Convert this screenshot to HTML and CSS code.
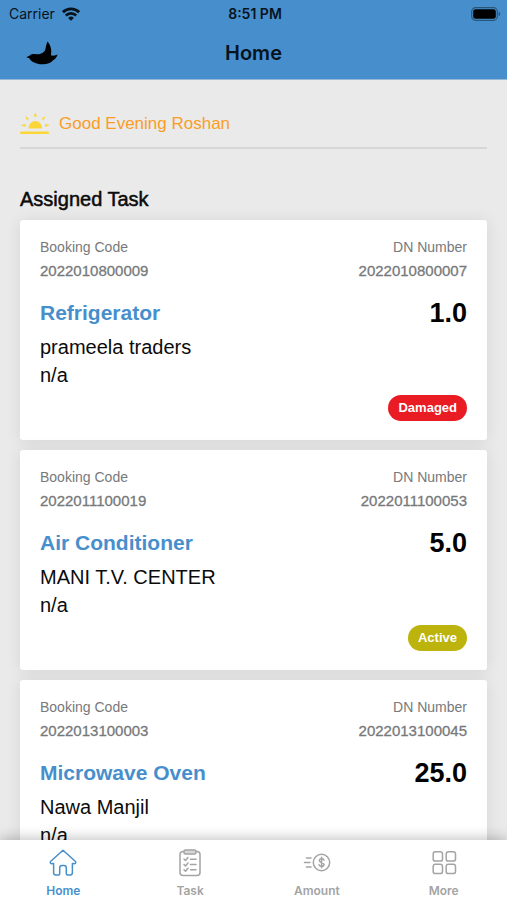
FILE: index.html
```html
<!DOCTYPE html>
<html lang="en">
<head>
<meta charset="utf-8">
<meta name="viewport" content="width=device-width, initial-scale=1">
<title>Home</title>
<link rel="stylesheet" href="styles.css">
</head>
<body>
<header class="header">
  <div class="status">
    <span class="carrier">Carrier
      <svg width="18" height="14" viewBox="0 0 18 14" aria-hidden="true"><g fill="none" stroke="#07131d" stroke-width="2.8"><path d="M.9 5.200a11.500 11.500 0 0 1 16.200 0"/><path d="M3.800 8.500a7.400 7.400 0 0 1 10.400 0"/></g><path d="M9 13.800 6.100 10.900a4.200 4.200 0 0 1 5.800 0z" fill="#07131d"/></svg>
    </span>
    <time class="time">8:51 PM</time>
    <svg class="battery" width="30" height="14" viewBox="0 0 30 14" aria-hidden="true"><rect x=".7" y=".7" width="25.6" height="12.6" rx="3.8" fill="none" stroke="#2b5578" stroke-width="1.2"/><rect x="2.2" y="2.2" width="22.6" height="9.6" rx="2.4" fill="#000"/><path d="M27.6 4.8c2.2.7 2.2 3.7 0 4.400z" fill="#2b5578"/></svg>
  </div>
  <div class="titlebar">
    <svg class="logo" width="32" height="24" viewBox="0 0 32 24" aria-label="Logo" role="img"><path d="M.3 16.200 3.800 14.500C5.500 12.800 8 12.700 10.500 13.300 15 13.400 18.500 11.500 19.300 8.500 20 6 20.200 3 21.500.5 24.500 3.500 26.200 9.500 24.800 14.300 27 15 29.500 14.600 31.600 13.500 30.700 16.500 29 18.500 26.800 19.500 24.500 22.300 20.500 23.600 16 23.300 10.500 23 5 21 3.300 17.200z"/></svg>
    <h1>Home</h1>
  </div>
</header>
<main class="content">
  <div class="greeting">
    <svg width="31" height="24" viewBox="0 0 31 24" fill="#fbd638" aria-hidden="true"><path d="M8.500 16.500a6.800 7.500 0 0 1 13.600 0z"/><rect x="0" y="19.500" width="29" height="2.400" rx="1.200"/><path d="m15.300.5 1.800 4h-3.600zM5 4l4 2.400-1.900 2zM25.600 4l-2.100 4.400-1.900-2zM.8 13.300l4.600-1.500.2 3.300zM29.800 13.300l-4.600-1.500-.2 3.300z"/></svg>
    <p>Good Evening Roshan</p>
  </div>
  <h2>Assigned Task</h2>
  <section class="tasks">
    <article class="card">
      <dl class="codes">
        <div><dt>Booking Code</dt><dd>2022010800009</dd></div>
        <div><dt>DN Number</dt><dd>2022010800007</dd></div>
      </dl>
      <div class="product"><h3>Refrigerator</h3><strong>1.0</strong></div>
      <p>prameela traders</p>
      <p>n/a</p>
      <span class="badge damaged">Damaged</span>
    </article>
    <article class="card">
      <dl class="codes">
        <div><dt>Booking Code</dt><dd>2022011100019</dd></div>
        <div><dt>DN Number</dt><dd>2022011100053</dd></div>
      </dl>
      <div class="product"><h3>Air Conditioner</h3><strong>5.0</strong></div>
      <p>MANI T.V. CENTER</p>
      <p>n/a</p>
      <span class="badge active">Active</span>
    </article>
    <article class="card">
      <dl class="codes">
        <div><dt>Booking Code</dt><dd>2022013100003</dd></div>
        <div><dt>DN Number</dt><dd>2022013100045</dd></div>
      </dl>
      <div class="product"><h3>Microwave Oven</h3><strong>25.0</strong></div>
      <p>Nawa Manjil</p>
      <p>n/a</p>
    </article>
  </section>
</main>
<nav class="tabs">
  <a href="#home" class="current" aria-current="page">
    <svg width="28" height="28" viewBox="0 0 28 28"><path d="M14 1.200 1.500 12.500c-.8 1.600.5 2.600 1.800 2.100H4.600v9.200q0 2.200 2.200 2.200h2.700q1.200 0 1.200-1.200v-6q0-2.300 2.300-2.300h2q2.300 0 2.300 2.300v6q0 1.200 1.200 1.200h2.700q2.200 0 2.200-2.200v-9.200h1.300c1.300.5 2.600-.5 1.800-2.100z"/></svg>
    Home
  </a>
  <a href="#task">
    <svg width="28" height="28" viewBox="0 0 28 28"><rect x="4" y="2.500" width="20" height="24" rx="3"/><rect x="8" y="1" width="12" height="4" rx="1.500" fill="#d8d8d8"/><path d="m8 10 1.500 1.500L12 8.500M8 15.500 9.500 17l2.500-3M8 20.700l1.500 1.500 2.500-3M14.500 10.300H20M14.500 15.500H20M14.500 20.700H20"/></svg>
    Task
  </a>
  <a href="#amount">
    <svg width="28" height="28" viewBox="0 0 28 28"><circle cx="18.500" cy="13.500" r="8.200"/><path d="M3.500 9H8M1.500 13.500H7M3.500 18H8"/><path d="M21 11.200c-.4-2-4.700-2-4.700.3 0 2.500 4.700 1.400 4.700 4 0 2.500-4.500 2.500-5 .2M18.600 8.200v10.600"/></svg>
    Amount
  </a>
  <a href="#more">
    <svg width="28" height="28" viewBox="0 0 28 28"><rect x="3.200" y="2.800" width="9.300" height="9.300" rx="2.200"/><rect x="16.200" y="2.800" width="9.300" height="9.300" rx="2.200"/><rect x="3.200" y="15.300" width="9.300" height="9.300" rx="2.200"/><rect x="16.200" y="15.300" width="9.300" height="9.300" rx="2.200"/></svg>
    More
  </a>
</nav>
</body>
</html>
```
FILE: styles.css
```css
* {
  box-sizing: border-box;
}

body {
  margin: 0;
  height: 100vh;
  display: flex;
  flex-direction: column;
  background: #eaeaea;
  color: #0b0b0b;
  font-family: "Liberation Sans", Arial, sans-serif;
}

h1, h2, h3, p, dl, dd {
  margin: 0;
}

svg {
  display: block;
  flex: none;
}

/* Header */
.header {
  background: #478fcc;
  color: #07131d;
  font-family: Inter, sans-serif;
  border-bottom: 1px solid #98b9d5;
}

.status,
.titlebar {
  display: grid;
  grid-template-columns: 1fr auto 1fr;
  align-items: center;
}

.status {
  height: 27px;
  padding: 0 6px 0 9px;
  font-size: 14px;
}

.carrier {
  display: flex;
  align-items: center;
  gap: 7px;
}

.time {
  font-weight: 600;
}

.battery {
  justify-self: end;
}

.titlebar {
  height: 52px;
  padding: 0 26px;
}

h1 {
  font-size: 20px;
  font-weight: 600;
  line-height: 24px;
}

/* Task list */
.content {
  flex: 1;
  min-height: 0;
  overflow: hidden;
  padding: 28px 20px 0;
}

.greeting {
  display: flex;
  align-items: center;
  gap: 8px;
  height: 41px;
  padding-bottom: 8px;
  border-bottom: 2px solid #d5d7d9;
  color: #fa9d25;
  font-size: 17px;
}

h2 {
  margin: 38px 0 9px;
  font-size: 20px;
  font-weight: 400;
  line-height: 24px;
  -webkit-text-stroke: 0.5px currentColor;
}

.tasks {
  display: grid;
  gap: 10px;
}

.card {
  display: flex;
  flex-direction: column;
  min-height: 220px;
  padding: 16px 20px 19px;
  background: #fff;
  border-radius: 3px;
  box-shadow: 0 1px 16px rgba(0, 0, 0, 0.09);
}

.codes {
  display: flex;
  justify-content: space-between;
  color: #77797b;
  font-size: 14px;
  line-height: 23px;
}

.codes div:last-child {
  text-align: right;
}

dd {
  font-size: 15px;
  -webkit-text-stroke: 0.3px currentColor;
}

.product {
  display: flex;
  justify-content: space-between;
  align-items: center;
  margin: 15px 0 4px;
  line-height: 32px;
}

h3 {
  color: #478fcc;
  font-size: 21px;
}

.product strong {
  color: #000;
  font-size: 27px;
}

.card p {
  font-size: 20px;
  line-height: 28px;
}

.badge {
  align-self: flex-end;
  margin-top: auto;
  padding: 0 10px;
  border-radius: 13px;
  color: #fff;
  font-size: 13px;
  font-weight: 700;
  line-height: 26px;
}

.damaged {
  background: #e91c24;
}

.active {
  background: #bcb30c;
}

/* Bottom tabs */
.tabs {
  position: relative;
  display: grid;
  grid-template-columns: repeat(4, 1fr);
  height: 60px;
  background: #fff;
  box-shadow: 0 -2px 12px rgba(0, 0, 0, 0.24);
}

.tabs a {
  display: flex;
  flex-direction: column;
  align-items: center;
  gap: 5px;
  padding-top: 9px;
  color: #a4a4a4;
  font-family: Inter, sans-serif;
  font-size: 12px;
  font-weight: 600;
  line-height: 18px;
  text-decoration: none;
}

.tabs .current {
  color: #478fcc;
}

.tabs svg {
  fill: none;
  stroke: currentColor;
  stroke-width: 1.5;
  stroke-linecap: round;
  stroke-linejoin: round;
}
```
